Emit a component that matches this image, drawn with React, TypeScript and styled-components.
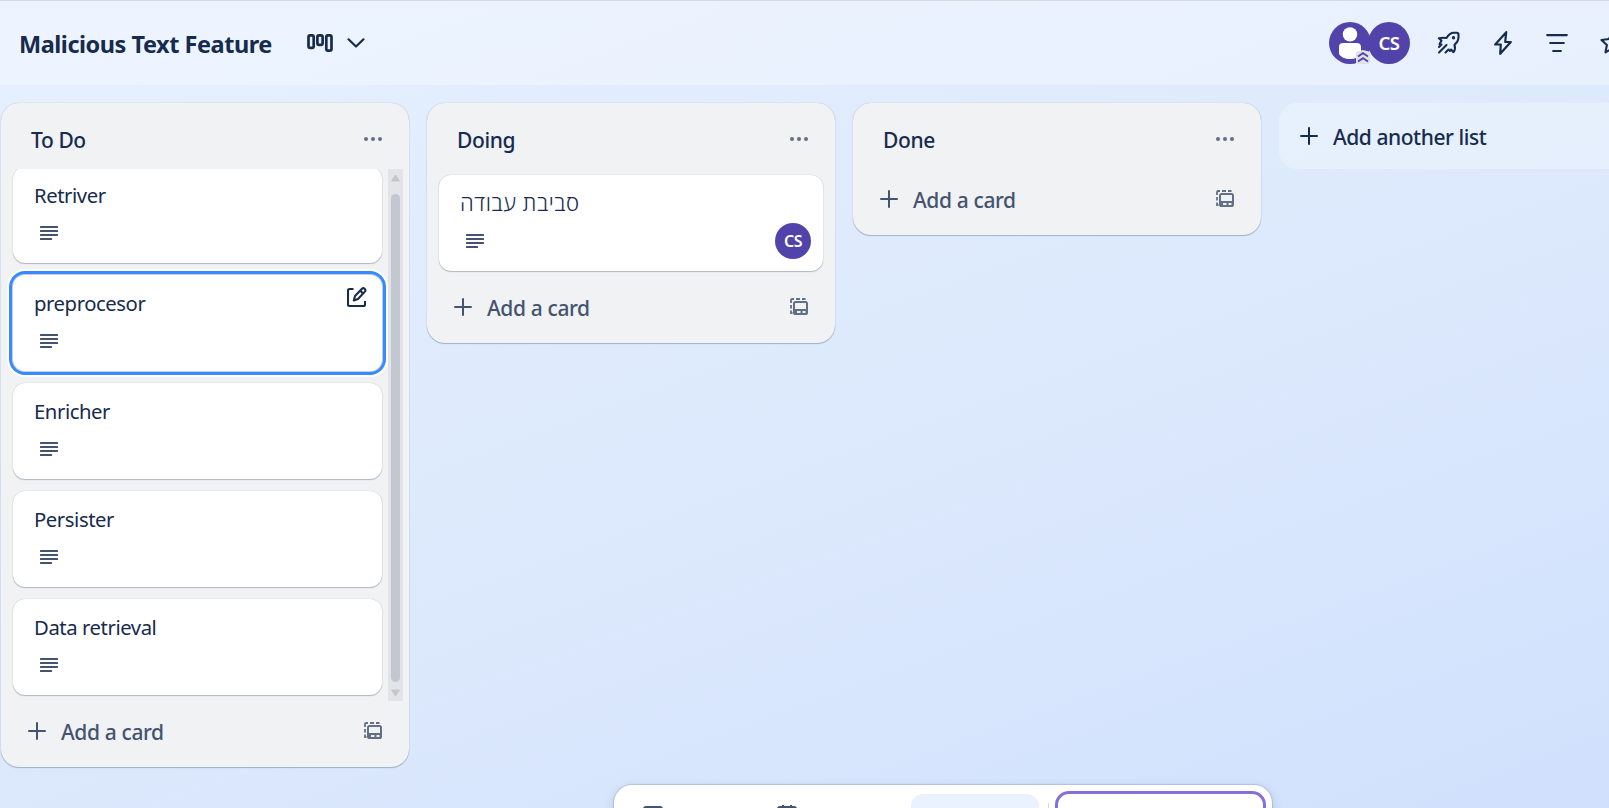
import React from "react";
import styled, { createGlobalStyle } from "styled-components";

const Global = createGlobalStyle`
  * { box-sizing: border-box; }
  html, body, #root { height: 100%; }
  body {
    margin: 0;
    overflow: hidden;
    color: #172b4d;
    font-family: "Noto Sans", "Open Sans", "DejaVu Sans", sans-serif;
  }
  button { font: inherit; color: inherit; border: 0; background: none; padding: 0; letter-spacing: inherit; }
  svg { display: block; flex: none; }
`;

const Page = styled.div`
  position: relative;
  width: 1609px;
  height: 808px;
  overflow: hidden;
  display: flex;
  flex-direction: column;
  background: linear-gradient(160deg, #e6f0ff 0%, #e1edfe 24%, #dce9fc 55%, #d7e5fd 76%, #d0e0fc 100%);
`;

const Header = styled.header`
  height: 85px;
  flex: none;
  display: flex;
  align-items: center;
  padding: 0 0 1px 19px;
  border-top: 1px solid #d5d9e2;
  background: rgba(255, 255, 255, 0.3);
`;

const BoardTitle = styled.h1`
  margin: 3px 0 0;
  width: 253px;
  font-size: 23.5px;
  line-height: 32px;
  font-weight: 700;
  letter-spacing: -0.47px;
  white-space: nowrap;
`;

const ViewButton = styled.button`
  display: flex;
  align-items: center;
  gap: 14px;
  margin-left: 35px;
`;

const HeaderTools = styled.div`
  display: flex;
  align-items: center;
  margin-left: 964px;
`;

const Avatar = styled.span<{ $size: number }>`
  position: relative;
  flex: none;
  width: ${(p) => p.$size}px;
  height: ${(p) => p.$size}px;
  border-radius: 50%;
  background: #5243aa;
  color: #fff;
  display: flex;
  align-items: center;
  justify-content: center;
  font-size: ${(p) => (p.$size > 40 ? 18.5 : 16)}px;
  font-weight: 600;
  letter-spacing: -0.6px;
  & + & { margin-left: -3px; }
`;

const AdminBadge = styled.span`
  position: absolute;
  right: 1px;
  bottom: 0;
`;

const ToolButton = styled.button<{ $gap: number }>`
  flex: none;
  margin-left: ${(p) => p.$gap}px;
`;

const Board = styled.main`
  flex: 1;
  min-height: 0;
  display: flex;
  align-items: flex-start;
  gap: 18px;
  padding: 18px 0 0 1px;
`;

const List = styled.section`
  flex: none;
  width: 408px;
  border-radius: 18px;
  background: #f1f2f4;
  box-shadow: 0 1px 1px #091e4240, 0 0 1px #091e424f;
`;

const ListHeader = styled.div`
  display: flex;
  justify-content: space-between;
  align-items: flex-start;
  height: 66px;
  padding: 22px 27px 0 30px;
`;

const ListTitle = styled.h2`
  margin: 0;
  font-size: 21px;
  line-height: 30px;
  font-weight: 500;
  letter-spacing: -0.4px;
`;

const MenuButton = styled.button`
  margin-top: 11px;
`;

const ScrollArea = styled.div`
  display: flex;
  justify-content: space-between;
  height: 532px;
  padding: 0 6px 0 0;
  overflow: hidden;
`;

const Cards = styled.div<{ $scrolled?: boolean }>`
  display: flex;
  flex-direction: column;
  gap: 12px;
  flex: 1;
  padding: ${(p) => (p.$scrolled ? "0 6px 0 12px" : "6px 12px")};
  margin-top: ${(p) => (p.$scrolled ? -2 : 0)}px;
`;

const Card = styled.article<{ $focused?: boolean }>`
  flex: none;
  display: flex;
  flex-direction: column;
  height: 96px;
  padding: 12px 12px 12px 21px;
  border-radius: 12px;
  background: #fff;
  box-shadow: ${(p) =>
    p.$focused
      ? "0 0 0 1px #c9ced8, 0 0 0 4px #388bff, 0 0 0 6px #fff"
      : "0 1px 1px #091e4240, 0 0 1px #091e424f"};
`;

const CardTop = styled.div`
  display: flex;
  justify-content: space-between;
  height: 36px;
`;

const CardTitle = styled.span<{ $rtl?: boolean }>`
  font-size: ${(p) => (p.$rtl ? 22 : 20.3)}px;
  font-weight: ${(p) => (p.$rtl ? 300 : 400)};
  line-height: ${(p) => (p.$rtl ? 30 : 32)}px;
  letter-spacing: ${(p) => (p.$rtl ? 0.6 : -0.43)}px;
  white-space: nowrap;
`;

const EditButton = styled.button`
  align-self: flex-start;
  margin-right: 3px;
`;

const CardBadges = styled.div`
  display: flex;
  align-items: flex-start;
  justify-content: space-between;
  padding-left: 6px;
  color: #44546f;
  & > svg { margin-top: 11px; }
`;

const Scrollbar = styled.div`
  width: 15px;
  display: flex;
  flex-direction: column;
  align-items: center;
  padding: 5px 0 4px;
  background: #e3e4e8;
  color: #c2c6cf;
`;

const Thumb = styled.div`
  width: 9px;
  height: 489px;
  margin: 12px 0 7px;
  border-radius: 5px;
  background: #c3c7d0;
`;

const ListFooter = styled.div`
  display: flex;
  align-items: flex-start;
  justify-content: space-between;
  height: 66px;
  padding: 14px 27px 0;
  color: #44546f;
`;

const AddCard = styled.button`
  display: flex;
  align-items: center;
  gap: 15px;
  font-size: 21px;
  line-height: 34px;
  font-weight: 500;
  letter-spacing: -0.38px;
`;

const TemplateButton = styled.button`
  margin-top: 7px;
  color: #626f86;
`;

const AddList = styled.button`
  flex: none;
  width: 408px;
  height: 66px;
  display: flex;
  align-items: center;
  gap: 15px;
  padding: 2px 0 0 21px;
  border-radius: 18px;
  background: rgba(255, 255, 255, 0.28);
  font-size: 21px;
  font-weight: 500;
  letter-spacing: -0.45px;
  white-space: nowrap;
`;

const Dock = styled.nav`
  position: absolute;
  left: 614px;
  top: 785px;
  width: 658px;
  height: 72px;
  display: flex;
  align-items: flex-start;
  padding: 6px 6px 0 28px;
  border-radius: 18px;
  background: #fff;
  box-shadow: 0 0 1px 1px #091e4224, 0 4px 12px #091e4226;
  color: #44546f;
`;

const DockIcon = styled.span<{ $gap?: number }>`
  margin: 14px 0 0 ${(p) => p.$gap ?? 0}px;
`;

const DockActive = styled.span`
  width: 128px;
  height: 60px;
  margin: 3px 0 0 113px;
  border-radius: 12px;
  background: #e9f2fe;
`;

const DockDivider = styled.span`
  width: 1px;
  height: 42px;
  margin: 12px 0 0 9px;
  background: #d5d9e0;
`;

const DockSwitch = styled.span`
  width: 211px;
  height: 62px;
  margin-left: 6px;
  border: 3px solid #8270db;
  border-radius: 14px;
`;

const Plus = () => (
  <svg width="18" height="21" viewBox="0 0 18 21" stroke="currentColor" strokeWidth="2" strokeLinecap="round">
    <path d="M9 1v16M1 9h16" />
  </svg>
);

const Dots = () => (
  <svg width="18" height="6" viewBox="0 0 18 6" fill="#626f86">
    <circle cx="2" cy="3" r="2" />
    <circle cx="9" cy="3" r="2" />
    <circle cx="16" cy="3" r="2" />
  </svg>
);

const Description = () => (
  <svg width="18" height="14" viewBox="0 0 18 14" fill="currentColor">
    <rect width="18" height="2" rx=".6" />
    <rect y="4" width="18" height="2" rx=".6" />
    <rect y="8" width="18" height="2" rx=".6" />
    <rect y="12" width="12" height="2" rx=".6" />
  </svg>
);

const Template = () => (
  <svg width="18" height="18" viewBox="0 0 18 18" fill="none" stroke="currentColor" strokeWidth="2">
    <rect x="4" y="4" width="13" height="12" rx="1.6" />
    <path d="M4 12h13" />
    <path d="M4 14h3M10.500 14h2M15.500 14H17" strokeWidth="2.400" />
    <path d="M1 5V2.200Q1 1 2.200 1H4M6 1h4M12 1h3.500M1 7v3.500M1 12.500V15h1.500" strokeWidth="1.800" />
  </svg>
);

const Edit = () => (
  <svg width="20" height="21" viewBox="0 0 20 21" fill="none" stroke="currentColor" strokeWidth="2.100" strokeLinejoin="round">
    <path d="M6.500 2H2.500Q1 2 1 3.500v14Q1 19 2.500 19h14Q18 19 18 17.500V14" />
    <path d="M6.800 13.500l1.200-4.500L15 1.700q1.200-1 2.500 0t.800 2.400L11 12z" />
    <path d="M13.300 3.800l2.900 2.900" />
  </svg>
);

const BoardView = () => (
  <svg width="26" height="18" viewBox="0 0 26 18" fill="none" stroke="currentColor" strokeWidth="2.700">
    <rect x="1.500" y="1.400" width="5.200" height="12.500" rx="1.700" />
    <rect x="10.400" y="1.400" width="5.200" height="9.500" rx="1.700" />
    <rect x="19.300" y="1.400" width="5.200" height="15.200" rx="1.700" />
  </svg>
);

const Chevron = () => (
  <svg width="18" height="10" viewBox="0 0 18 10" fill="none" stroke="currentColor" strokeWidth="2.200" strokeLinecap="round" strokeLinejoin="round">
    <path d="M1.500 1.300L9 8.500l7.500-7.200" />
  </svg>
);

const Person = () => (
  <svg width="42" height="42" viewBox="0 0 42 42" fill="#fff">
    <circle cx="21" cy="12.400" r="7.200" />
    <path d="M10 25q0-4 4-4h13.500Q32 21 32 25v7q-3 5-11 5t-11-5z" />
  </svg>
);

const Admin = () => (
  <svg width="14" height="14" viewBox="0 0 14 14">
    <path d="M0 3.500Q0 1.500 3 1L7 0l4 1q3 .5 3 2.500V12q0 2-3 2H3q-3 0-3-2z" fill="#dfe1e6" />
    <path d="M2 6.500l5-3.300 5 3.300M2 11.500l5-3.300 5 3.300" fill="none" stroke="#5243aa" strokeWidth="1.800" />
  </svg>
);

const Rocket = () => (
  <svg width="23" height="23" viewBox="0 0 23 23" fill="none" stroke="currentColor" strokeWidth="2.100" strokeLinejoin="round" strokeLinecap="round">
    <path d="M2.500 13.200l2-3.700-2.700-2.200Q5.500 6.500 9.500 7Q12.500 1.700 17 1.700h2.700q1.800 0 1.800 1.800v2.700q0 4-4 7.500Q18.800 18 16.500 21.200l-2.500-2.700" />
    <path d="M2 16l2.500-2.500M2 21.500l7.500-7.500M8.500 21.500l3-3 1.500 1.500" />
    <circle cx="16.500" cy="6.700" r="1.100" fill="currentColor" strokeWidth="1.200" />
  </svg>
);

const Bolt = () => (
  <svg width="18" height="24" viewBox="0 0 18 24" fill="none" stroke="currentColor" strokeWidth="2.200" strokeLinejoin="round">
    <path d="M12.200 1.200L1.200 13.500h5.600L6.200 22.800 16.800 11h-5.600z" />
  </svg>
);

const Filter = () => (
  <svg width="22" height="18" viewBox="0 0 22 18" stroke="currentColor" strokeWidth="2.100" strokeLinecap="round">
    <path d="M1.200 1.100h19.600M4.200 9h13.600M7.200 17h7.600" />
  </svg>
);

const Star = () => (
  <svg width="24" height="23" viewBox="0 0 24 23" fill="none" stroke="currentColor" strokeWidth="2.100" strokeLinejoin="round">
    <path d="M12 1.500l3 6.500 7.500 1-5.400 5 1.400 7.300L12 17.700l-6.500 3.600L6.900 14 1.500 9 9 8z" />
  </svg>
);

const Arrow = ({ down }: { down?: boolean }) => (
  <svg width="9" height="8" viewBox="0 0 9 8" fill="currentColor" stroke="currentColor" strokeLinejoin="round">
    <path d={down ? "M.5 1h8L4.500 7z" : "M.5 7h8L4.500 1z"} />
  </svg>
);

const Inbox = () => (
  <svg width="22" height="20" viewBox="0 0 22 20" fill="none" stroke="currentColor" strokeWidth="2">
    <rect x="2" y="2" width="18" height="16" rx="2" />
  </svg>
);

const Calendar = () => (
  <svg width="22" height="20" viewBox="0 0 22 20" fill="none" stroke="currentColor" strokeWidth="2">
    <rect x="2" y="2" width="18" height="16" rx="2" />
    <path d="M7 0v3M15 0v3" />
  </svg>
);

type CardData = { title: string; rtl?: boolean; focused?: boolean; member?: string };

const CardItem = ({ title, rtl, focused, member }: CardData) => (
  <Card $focused={focused}>
    <CardTop>
      <CardTitle dir="auto" $rtl={rtl}>{title}</CardTitle>
      {focused && <EditButton aria-label="Edit card"><Edit /></EditButton>}
    </CardTop>
    <CardBadges>
      <Description />
      {member && <Avatar $size={36}>{member}</Avatar>}
    </CardBadges>
  </Card>
);

const ListTop = ({ title }: { title: string }) => (
  <ListHeader>
    <ListTitle>{title}</ListTitle>
    <MenuButton aria-label="List actions"><Dots /></MenuButton>
  </ListHeader>
);

const Footer = () => (
  <ListFooter>
    <AddCard><Plus />Add a card</AddCard>
    <TemplateButton aria-label="Create from template"><Template /></TemplateButton>
  </ListFooter>
);

const todo: CardData[] = [
  { title: "Retriver" },
  { title: "preprocesor", focused: true },
  { title: "Enricher" },
  { title: "Persister" },
  { title: "Data retrieval" },
];

export default function App() {
  return (
    <Page>
      <Global />
      <Header>
        <BoardTitle>Malicious Text Feature</BoardTitle>
        <ViewButton aria-label="Board view"><BoardView /><Chevron /></ViewButton>
        <HeaderTools>
          <Avatar $size={42}><Person /><AdminBadge><Admin /></AdminBadge></Avatar>
          <Avatar $size={42}>CS</Avatar>
          <ToolButton $gap={27} aria-label="Power-Ups"><Rocket /></ToolButton>
          <ToolButton $gap={34} aria-label="Automation"><Bolt /></ToolButton>
          <ToolButton $gap={34} aria-label="Filter"><Filter /></ToolButton>
          <ToolButton $gap={32} aria-label="Star"><Star /></ToolButton>
        </HeaderTools>
      </Header>
      <Board>
        <List>
          <ListTop title="To Do" />
          <ScrollArea>
            <Cards $scrolled>{todo.map((c) => <CardItem key={c.title} {...c} />)}</Cards>
            <Scrollbar><Arrow /><Thumb /><Arrow down /></Scrollbar>
          </ScrollArea>
          <Footer />
        </List>
        <List>
          <ListTop title="Doing" />
          <Cards><CardItem title="סביבת עבודה" rtl member="CS" /></Cards>
          <Footer />
        </List>
        <List>
          <ListTop title="Done" />
          <Footer />
        </List>
        <AddList><Plus />Add another list</AddList>
      </Board>
      <Dock>
        <DockIcon><Inbox /></DockIcon>
        <DockIcon $gap={112}><Calendar /></DockIcon>
        <DockActive />
        <DockDivider />
        <DockSwitch />
      </Dock>
    </Page>
  );
}
